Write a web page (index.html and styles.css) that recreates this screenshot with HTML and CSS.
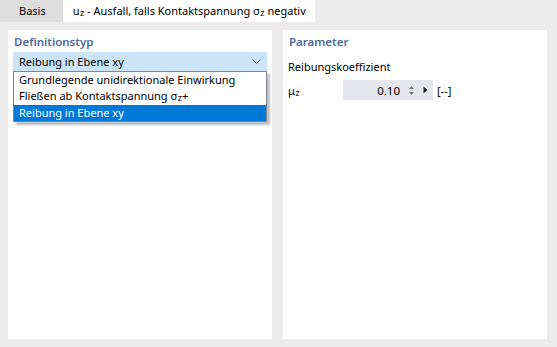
FILE: index.html
```html
<!DOCTYPE html>
<html>
<head>
<meta charset="utf-8">
<link rel="stylesheet" href="styles.css">
</head>
<body>
<div class="tabs">
  <div class="tab">Basis</div>
  <div class="tab active">u<span class="sub">z</span> - Ausfall, falls Kontaktspannung σ<span class="sub">z</span> negativ</div>
</div>
<div class="content">
  <div class="panel">
    <div class="title">Definitionstyp</div>
    <div class="combo-wrap">
      <div class="combo">
        <span>Reibung in Ebene xy</span>
        <svg class="chev" width="9" height="5" viewBox="0 0 9 5"><path d="M0.5 0.5 L4.5 4.5 L8.5 0.5" fill="none" stroke="#555" stroke-width="1"/></svg>
      </div>
      <div class="list">
        <div class="item">Grundlegende unidirektionale Einwirkung</div>
        <div class="item">Fließen ab Kontaktspannung σ<span class="sub">z</span>+</div>
        <div class="item sel">Reibung in Ebene xy</div>
      </div>
    </div>
  </div>
  <div class="panel">
    <div class="title">Parameter</div>
    <div class="group">Reibungskoeffizient</div>
    <div class="row">
      <span class="lbl">μ<span class="sub">z</span></span>
      <div class="input">
        <span class="val">0.10</span>
        <svg class="spin" width="7" height="11" viewBox="0 0 7 11"><path d="M3.5 1 L6 4 L1 4 Z M1 7 L6 7 L3.5 10 Z" fill="#777"/></svg>
        <svg class="arrow" width="5" height="8" viewBox="0 0 5 8"><path d="M0.5 0.5 L4.5 4 L0.5 7.5 Z" fill="#222"/></svg>
      </div>
      <span class="unit">[--]</span>
    </div>
  </div>
</div>
</body>
</html>
```
FILE: styles.css
```css
html, body {
  margin: 0;
  padding: 0;
}
body {
  width: 557px;
  height: 347px;
  background: #ececec;
  font-family: "Noto Sans", "Open Sans", sans-serif;
  font-size: 11px;
  color: #000;
  overflow: hidden;
}
.sub {
  font-size: 9px;
  position: relative;
  top: 1px;
  margin-left: 0.5px;
}
.tabs {
  display: flex;
  height: 22px;
}
.tab {
  height: 22px;
  line-height: 22px;
  padding: 0 17px 0 19px;
  background: #dedede;
  white-space: nowrap;
}
.tab.active {
  background: #fff;
  padding: 0 9px 0 10px;
}
.content {
  display: flex;
  gap: 11px;
  padding: 8px 10px 8px 8px;
  height: 309px;
}
.panel {
  width: 264px;
  background: #fff;
  padding: 4px 5px 0 5px;
  box-sizing: border-box;
}
.title {
  color: #4f6a9c;
  font-weight: 600;
  height: 18px;
  line-height: 16px;
  padding-left: 1px;
  font-size: 11.5px;
}
.combo-wrap {
  position: relative;
  width: 254px;
}
.combo {
  height: 19px;
  background: #cce4f7;
  display: flex;
  align-items: center;
  justify-content: space-between;
  padding: 0 6px 0 6px;
}
.list {
  position: absolute;
  left: 0;
  top: 19px;
  width: 252px;
  border: 1px solid #828790;
  background: #fff;
  box-shadow: 3px 3px 2px rgba(0,0,0,0.25);
}
.item {
  height: 16.3px;
  line-height: 16px;
  padding-left: 5px;
  white-space: nowrap;
}
.item.sel {
  background: #0078d7;
  color: #fff;
}
.group {
  margin-top: 7px;
  height: 16px;
  line-height: 16px;
}
.row {
  display: flex;
  align-items: center;
  margin-top: 5px;
  height: 20px;
}
.lbl {
  width: 55px;
}
.input {
  width: 90px;
  height: 20px;
  background: #e6e6ef;
  display: flex;
  align-items: center;
  justify-content: flex-end;
  padding-right: 5px;
  box-sizing: border-box;
}
.val {
  margin-right: 8px;
  font-size: 11.5px;
}
.spin {
  margin-right: 8px;
}
.unit {
  margin-left: 4px;
}
```
